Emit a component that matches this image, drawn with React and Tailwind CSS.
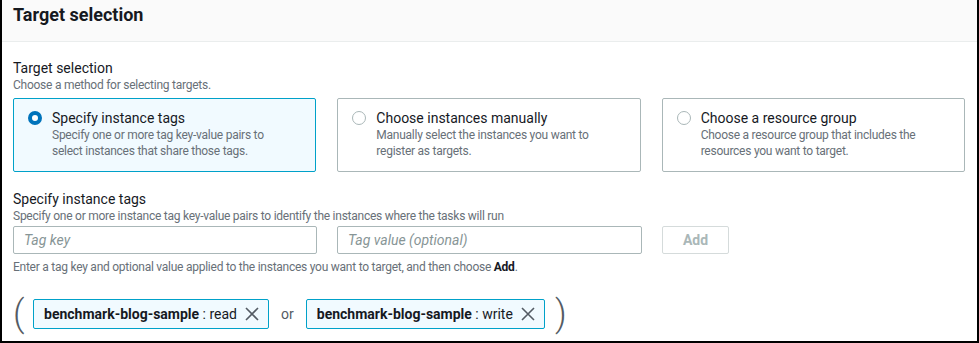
import React, { useState } from 'react';

const opciones = [
  { id: 'tags', titulo: 'Specify instance tags', desc: ['Specify one or more tag key-value pairs to', 'select instances that share those tags.'] },
  { id: 'manual', titulo: 'Choose instances manually', desc: ['Manually select the instances you want to', 'register as targets.'] },
  { id: 'group', titulo: 'Choose a resource group', desc: ['Choose a resource group that includes the', 'resources you want to target.'] },
];

const Cerrar = () => (
  <svg width="16" height="16" viewBox="0 0 16 16" className="shrink-0">
    <path d="M2 2 L14 14 M14 2 L2 14" stroke="#545b64" strokeWidth="1.6" fill="none" />
  </svg>
);

const Token = ({ k, v }) => (
  <div className="h-[30px] flex items-center gap-[7px] pl-[10px] pr-[8px] bg-[#f1faff] border border-[#00a1c9] rounded-[2px] text-[14px] text-[#16191f]">
    <span><b className="font-bold">{k}</b> : {v}</span>
    <Cerrar />
  </div>
);

export default function App() {
  const [sel, setSel] = useState('tags');

  return (
    <div className="w-[979px] h-[343px] bg-white border-x-2 border-b-2 border-black overflow-hidden font-['Roboto',sans-serif] text-[#16191f]">
      {/* cabecera */}
      <div className="h-[42px] bg-[#fafafa] border-b border-[#eaeded] px-[11px] pt-[3px]">
        <h2 className="text-[18px] font-bold leading-[24px]">Target selection</h2>
      </div>

      <div className="px-[11px] pt-[17px]">
        <div className="text-[14px] leading-[18px]">Target selection</div>
        <div className="text-[12px] leading-[16px] tracking-[-0.25px] text-[#687078]">Choose a method for selecting targets.</div>

        {/* opciones */}
        <div className="grid grid-cols-3 gap-[21px] mt-[5px] w-[952px]">
          {opciones.map(o => {
            const activo = sel === o.id;
            return (
              <button
                key={o.id}
                onClick={() => setSel(o.id)}
                className={`h-[74px] text-left flex items-start gap-[10px] pl-[14px] pr-[12px] pt-[10px] rounded-[2px] border ${activo ? 'bg-[#f1faff] border-[#00a1c9]' : 'bg-white border-[#aab7b8]'}`}
              >
                <span className={`mt-[2px] w-[14px] h-[14px] rounded-full shrink-0 ${activo ? 'border-[4px] border-[#0073bb] bg-white' : 'border border-[#aab7b8] bg-white'}`} />
                <span className="flex-1 flex flex-col">
                  <span className="text-[14px] leading-[18px]">{o.titulo}</span>
                  {o.desc.map(l => (
                    <span key={l} className="text-[12px] leading-[16px] tracking-[-0.25px] text-[#687078] whitespace-nowrap">{l}</span>
                  ))}
                </span>
              </button>
            );
          })}
        </div>

        {/* etiquetas */}
        <div className="mt-[18px] text-[14px] leading-[18px]">Specify instance tags</div>
        <div className="text-[12px] leading-[16px] tracking-[-0.25px] text-[#687078]">Specify one or more instance tag key-value pairs to identify the instances where the tasks will run</div>

        <div className="flex items-center mt-[2px]">
          <input placeholder="Tag key" className="w-[304px] h-[28px] border border-[#aab7b8] rounded-[2px] px-[10px] text-[14px] italic placeholder:text-[#879596] outline-none" />
          <input placeholder="Tag value (optional)" className="ml-[20px] w-[305px] h-[28px] border border-[#aab7b8] rounded-[2px] px-[10px] text-[14px] italic placeholder:text-[#879596] outline-none" />
          <button className="ml-[20px] w-[67px] h-[28px] border border-[#d5dbdb] rounded-[2px] text-[14px] font-bold text-[#aab7b8] bg-white">Add</button>
        </div>
        <div className="mt-[5px] text-[12px] leading-[16px] tracking-[-0.25px] text-[#687078]">
          Enter a tag key and optional value applied to the instances you want to target, and then choose <b className="font-bold text-[#16191f]">Add</b>.
        </div>

        {/* tokens */}
        <div className="flex items-center mt-[24px]">
          <span className="text-[36px] font-light leading-[30px] text-[#545b64] w-[20px]">(</span>
          <Token k="benchmark-blog-sample" v="read" />
          <span className="mx-[12px] text-[14px] text-[#545b64]">or</span>
          <Token k="benchmark-blog-sample" v="write" />
          <span className="ml-[10px] text-[36px] font-light leading-[30px] text-[#545b64]">)</span>
        </div>
      </div>
    </div>
  );
}
